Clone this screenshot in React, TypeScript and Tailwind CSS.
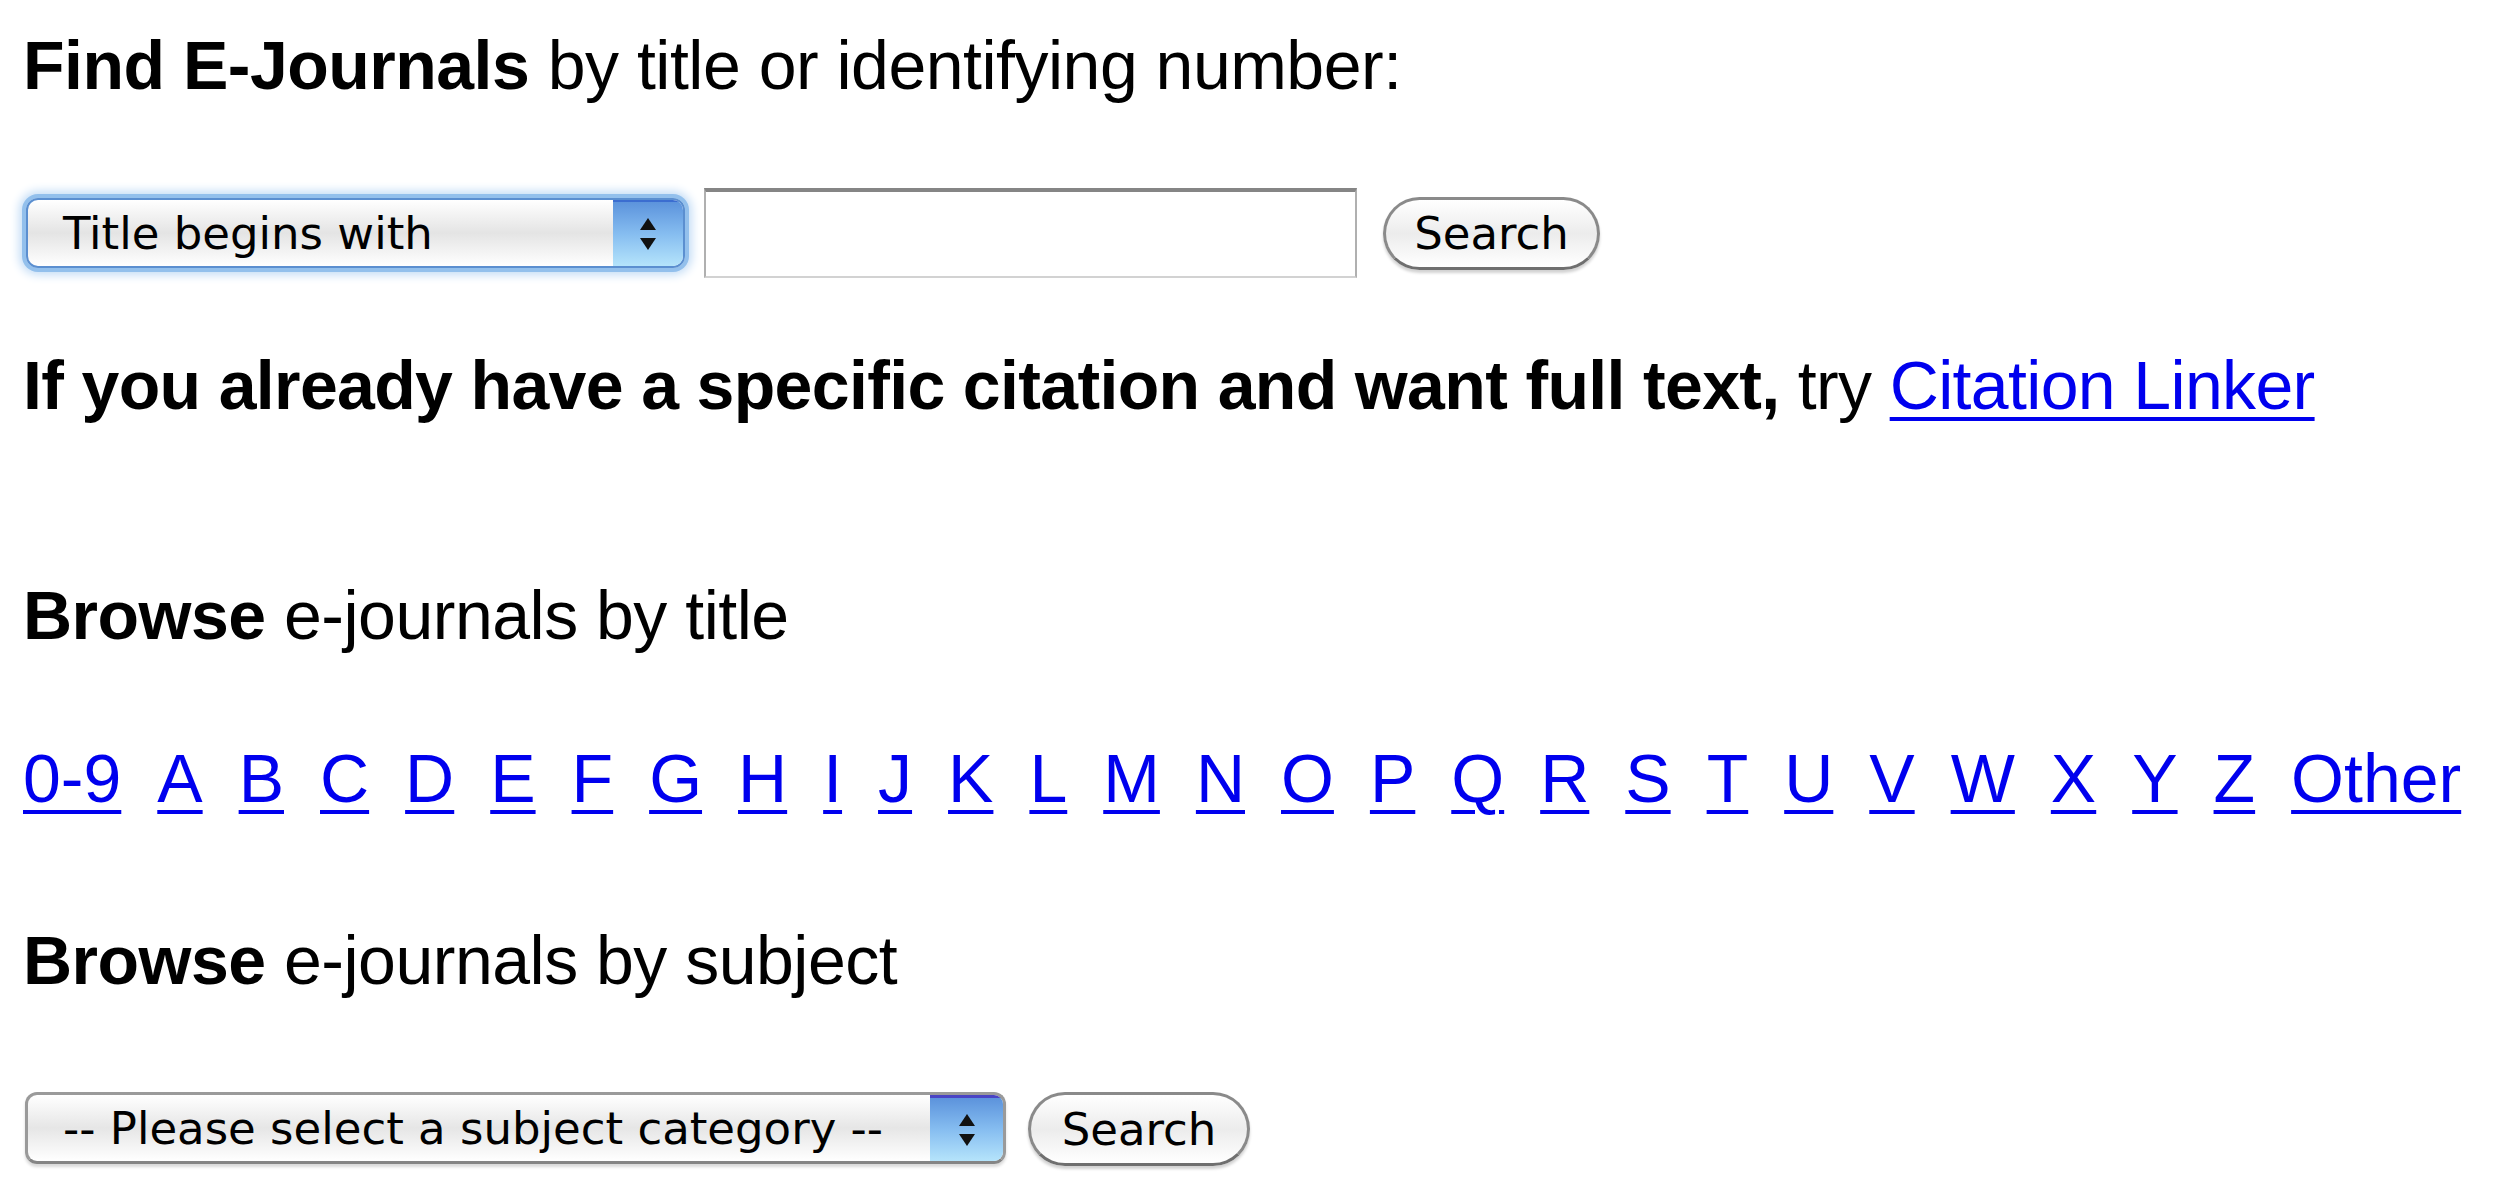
import { Fragment } from 'react'

const letters = [
  '0-9', 'A', 'B', 'C', 'D', 'E', 'F', 'G', 'H', 'I', 'J', 'K', 'L', 'M',
  'N', 'O', 'P', 'Q', 'R', 'S', 'T', 'U', 'V', 'W', 'X', 'Y', 'Z', 'Other',
]

// aqua style up/down arrows
function Stepper({ className }: { className: string }) {
  return (
    <div className={`flex h-full flex-col items-center justify-center gap-[6px] ${className}`}>
      <svg width="20" height="14" viewBox="0 0 20 14">
        <path d="M10 1 L18 13 L2 13 Z" fill="#111" />
      </svg>
      <svg width="20" height="14" viewBox="0 0 20 14">
        <path d="M2 1 L18 1 L10 13 Z" fill="#111" />
      </svg>
    </div>
  )
}

function SearchButton({ className }: { className: string }) {
  return (
    <button
      className={`flex items-center justify-center rounded-full border-[3px] border-[#8a8a8a] border-b-[#6f6f6f] bg-gradient-to-b from-white via-[#ececec] to-white text-[45px] leading-none text-black shadow-[0_3px_3px_rgba(0,0,0,0.18)] ${className}`}
      style={{ fontFamily: '"DejaVu Sans", "Liberation Sans", sans-serif' }}
    >
      Search
    </button>
  )
}

export default function App() {
  return (
    <div
      className="min-h-[1192px] w-[2508px] bg-white pl-[23px] pt-[26px] text-[68px] leading-[78px] text-black"
      style={{ fontFamily: '"Liberation Sans", Arial, sans-serif' }}
    >
      {/* title search */}
      <p className="tracking-[-0.5px]">
        <b>Find E-Journals</b> by title or identifying number:
      </p>

      <div
        className="mt-[84px] flex h-[90px] items-center"
        style={{ fontFamily: '"DejaVu Sans", "Liberation Sans", sans-serif' }}
      >
        <div className="ml-[3px] flex h-[70px] w-[659px] overflow-hidden rounded-[12px] border-2 border-[#5b8fd0] bg-gradient-to-b from-white via-[#e4e4e4] to-white shadow-[0_0_0_4px_#93c0ec,0_0_10px_7px_#c4ddf6]">
          <div className="flex flex-1 items-center pl-[35px] text-[45px] leading-none">
            Title begins with
          </div>
          <Stepper className="w-[70px] border-t-2 border-[#3b6dd0] bg-gradient-to-b from-[#5c93dc] via-[#86bdf0] to-[#b5e4fb]" />
        </div>
        <input
          type="text"
          className="ml-[19px] h-[90px] w-[653px] border-x-2 border-t-[4px] border-b-2 border-x-[#b0b0b0] border-t-[#858585] border-b-[#d2d2d2] bg-white outline-none"
        />
        <SearchButton className="ml-[26px] h-[73px] w-[217px]" />
      </div>

      <p className="mt-[68px] tracking-[-0.65px]">
        <b>If you already have a specific citation and want full text,</b> try{' '}
        <a href="#" className="text-[#0000ee] underline decoration-[4px] underline-offset-[8px]">
          Citation Linker
        </a>
      </p>

      {/* browse by title */}
      <p className="mt-[152px] tracking-[-0.5px]">
        <b>Browse</b> e-journals by title
      </p>

      <div className="mt-[85px] flex gap-[36px]">
        {letters.map((l) => (
          <Fragment key={l}>
            <a href="#" className="text-[#0000ee] underline decoration-[4px] underline-offset-[8px]">
              {l}
            </a>
          </Fragment>
        ))}
      </div>

      {/* browse by subject */}
      <p className="mt-[104px] tracking-[-0.5px]">
        <b>Browse</b> e-journals by subject
      </p>

      <div
        className="mt-[93px] flex h-[75px] items-start"
        style={{ fontFamily: '"DejaVu Sans", "Liberation Sans", sans-serif' }}
      >
        <div className="ml-[2px] flex h-[72px] w-[981px] overflow-hidden rounded-[12px] border-[3px] border-[#9a9a9a] border-b-[#858585] bg-gradient-to-b from-white via-[#e6e6e6] to-white shadow-[0_3px_3px_rgba(0,0,0,0.15)]">
          <div className="flex flex-1 items-center pl-[35px] text-[45px] leading-none">
            -- Please select a subject category --
          </div>
          <Stepper className="w-[73px] border-t-[3px] border-[#4a44c4] bg-gradient-to-b from-[#5c93dc] via-[#86bdf0] to-[#b5e4fb]" />
        </div>
        <SearchButton className="ml-[22px] h-[74px] w-[222px]" />
      </div>
    </div>
  )
}
